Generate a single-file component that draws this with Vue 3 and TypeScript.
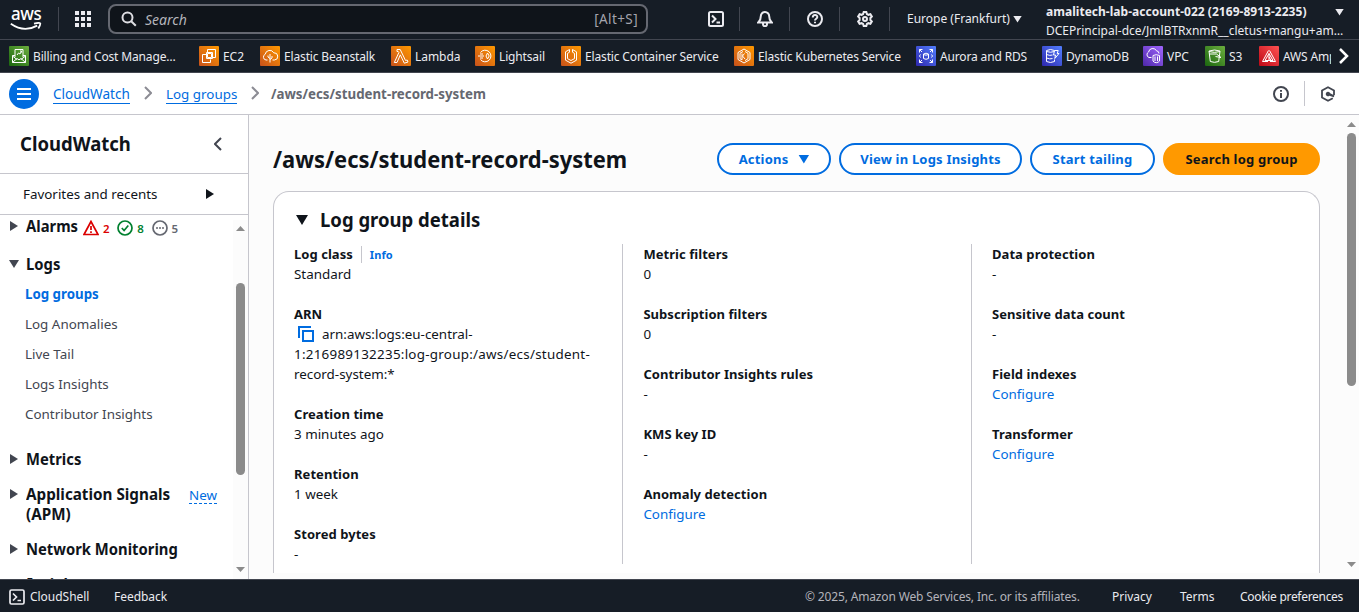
<script setup lang="ts">
interface Service { name: string; icon: string; tone: string }
interface Detail { label: string; value: string; link?: boolean; info?: boolean; copy?: boolean }

const services: Service[] = [
  { name: 'Billing and Cost Manage…', icon: 'billing', tone: 'green' },
  { name: 'EC2', icon: 'ec2', tone: 'orange' },
  { name: 'Elastic Beanstalk', icon: 'beanstalk', tone: 'orange' },
  { name: 'Lambda', icon: 'lambda', tone: 'orange' },
  { name: 'Lightsail', icon: 'lightsail', tone: 'orange' },
  { name: 'Elastic Container Service', icon: 'ecs', tone: 'orange' },
  { name: 'Elastic Kubernetes Service', icon: 'eks', tone: 'orange' },
  { name: 'Aurora and RDS', icon: 'rds', tone: 'blue' },
  { name: 'DynamoDB', icon: 'dynamo', tone: 'blue' },
  { name: 'VPC', icon: 'vpc', tone: 'purple' },
  { name: 'S3', icon: 's3', tone: 'green' },
  { name: 'AWS Amplify', icon: 'amplify', tone: 'red' },
]

const glyphs: Record<string, string> = {
  billing: 'M6 9.500H3.500v7h13v-7H14M3.500 10l4.500 3.500M16.500 10l-4.500 3.500M3.500 16.500l4.500-4 2 1.300 2-1.300 4.500 4M6 11V3.500h8V11M8 9l1.500-2 1.500 1 1.500-3M11 5h1.500v1.500',
  ec2: 'M8.500 7.500h4v4h-4zM7.500 12.500h6v-6h-6zM7 8.500H3.500v8h8V13.500M8.500 6V3.500h8v8H14',
  beanstalk: 'M7.500 14H6a3 3 0 0 1-.800-5.700A4.600 4.600 0 0 1 13.800 6.800 3.400 3.400 0 0 1 14.500 14h-2M10 16.500V8M10 12.500 8 11V9.500M10 13.500l2-1.500v-2',
  lambda: 'M6 3.500h3.200L14.500 14.500l1.700-.5.8 2-3.700 1.200L9.300 8.800 6 16.500H3.300L7.900 6.500 7.200 5.500H6z',
  lightsail: 'M5.500 6.500a5.800 5.800 0 1 1 0 7M3 10h6M5 8h3M5 12h3M12.500 7l1.700 3-1.700 3L11 10z',
  ecs: 'M8.500 3.500 4.500 5.800v8.400l5.500 3 5.500-3V5.800l-4-2.300v2.700l2 1.200v5.200L10 14.500l-3.500-1.900V7.400l2-1.200z',
  eks: 'M10 3 4 6.500v7l6 3.500 6-3.500v-7zM9 5.500l-3 1.800v5.400l2 1.200V7.500M11 5.500l3 1.800v5.400l-3 1.900M10.500 7.500 8.500 10l2.500 3',
  rds: 'M3.500 6.500v-3h3M13.500 3.500h3v3M16.500 13.500v3h-3M6.500 16.500h-3v-3M3.500 3.500l2.500 2.500M16.500 3.500 14 6M16.500 16.500 14 14M3.500 16.500 6 14M7.500 8q2.500-1.600 5 0v4.500q-2.500 1.600-5 0zM7.500 8.500q2.500 1.400 5 0M4.500 8.500l-1 1.500 1 1.500M15.500 8.500l1 1.500-1 1.500',
  dynamo: 'M4.500 4.500q4-2 8 0M4.500 4.500v11q4 2 8 0v-2M4.500 5.500q4 1.500 8 0M4.500 8.500q3.500 1.500 6 .5M4.500 12q3.500 1.500 6 .5M12.500 4.500h3.700l-1 3H17l-4.200 5 .7-3.500h-2z',
  vpc: 'M8.500 11.500H6a3 3 0 0 1-.4-5.500 4.200 4.200 0 0 1 7.900-1.200 2.800 2.800 0 0 1 2.500 2.700M10 9.500q3.200-1.600 6.500 0v5.500q-1 1.500-3.200 1.700-2.300-.2-3.300-1.700zM12 10.500v4.500M14.500 10.500v4.500',
  s3: 'M4 5q5.500-2 11 0l-1.300 10.500q-4.200 1.700-8.400 0zM4 5.500q5.500 1.800 11 0M4.500 8h7l4.500 3.500-5.500-1',
  amplify: 'M9.500 4.500 3.500 15.500h5.500M10.500 4.500l6 11h-5.500M10 7.500l-4 7h8zM10 7.500v7M10 11l2 3.500',
}

const subLinks = ['Log groups', 'Log Anomalies', 'Live Tail', 'Logs Insights', 'Contributor Insights']

const columns: Detail[][] = [
  [
    { label: 'Log class', value: 'Standard', info: true },
    { label: 'ARN', value: 'arn:aws:logs:eu-central-\n1:216989132235:log-group:/aws/ecs/student-\nrecord-system:*', copy: true },
    { label: 'Creation time', value: '3 minutes ago' },
    { label: 'Retention', value: '1 week' },
    { label: 'Stored bytes', value: '-' },
  ],
  [
    { label: 'Metric filters', value: '0' },
    { label: 'Subscription filters', value: '0' },
    { label: 'Contributor Insights rules', value: '-' },
    { label: 'KMS key ID', value: '-' },
    { label: 'Anomaly detection', value: 'Configure', link: true },
  ],
  [
    { label: 'Data protection', value: '-' },
    { label: 'Sensitive data count', value: '-' },
    { label: 'Field indexes', value: 'Configure', link: true },
    { label: 'Transformer', value: 'Configure', link: true },
  ],
]
</script>

<template>
  <div class="console">
    <header class="top">
      <div class="logo">
        <span class="logo-word">aws</span>
        <svg class="smile" viewBox="0 0 32 10"><path d="M.8 1.800Q14 11 27.200 3.600" /><path d="M24 1.600q5.600-1.400 6.200-.2.500 1.300-1.900 5" /></svg>
      </div>
      <i class="rule logo-rule"></i>
      <svg class="grid-icon" viewBox="0 0 16 16"><path d="M0 0h4v4H0zM6 0h4v4H6zM12 0h4v4h-4zM0 6h4v4H0zM6 6h4v4H6zM12 6h4v4h-4zM0 12h4v4H0zM6 12h4v4H6zM12 12h4v4h-4z" /></svg>
      <div class="search">
        <svg viewBox="0 0 16 16"><circle cx="6.500" cy="6.500" r="5" /><path d="m10.200 10.200 4.600 4.600" /></svg>
        <em>Search</em><span>[Alt+S]</span>
      </div>
      <nav class="tools">
        <a><svg viewBox="0 0 16 16"><rect x="1" y="1" width="14" height="14" rx="1.500" /><path d="m4 4.500 3.500 3.500L4 11.500M8.500 11.500H12" /></svg></a>
        <a><svg viewBox="0 0 16 16"><path d="M8 1a4.200 4.200 0 0 0-4.200 4.200c0 3.800-.8 4.300-2.600 6.300h13.600c-1.800-2-2.600-2.500-2.600-6.300A4.200 4.200 0 0 0 8 1zM6 12v1.200a2 2 0 0 0 4 0V12" /></svg></a>
        <a><svg viewBox="0 0 16 16"><circle cx="8" cy="8" r="7" /><path d="M5.800 6.400c0-3.100 4.500-3 4.500-.4C10.300 7.700 8 7.700 8 9.500M8 10.700v1.600" /></svg></a>
        <a><svg viewBox="0 0 16 16"><path d="m6.700 1h2.600l.6 2 1.500.8 2-.6 1.400 2.300L13.400 7v2l1.400 1.500-1.400 2.300-2-.6-1.500.8-.6 2H6.700l-.6-2-1.500-.8-2 .6-1.400-2.300L2.600 9V7L1.200 5.500l1.400-2.300 2 .6L6.100 3z" /><circle cx="8" cy="8" r="2" /></svg></a>
      </nav>
      <span class="region">Europe (Frankfurt)</span><i class="caret-down"></i>
      <div class="account"><b>amalitech-lab-account-022 (2169-8913-2235)</b><span>DCEPrincipal-dce/JmlBTRxnmR__cletus+mangu+am…</span></div>
      <i class="caret-down account-caret"></i>
    </header>

    <nav class="services">
      <a v-for="s in services" :key="s.name" class="service">
        <svg :class="['tile', s.tone]" viewBox="0 0 20 20"><path :d="glyphs[s.icon]" /></svg>
        <span>{{ s.name }}</span>
      </a>
      <svg class="next" viewBox="0 0 10 16"><path d="m1 1 7 7-7 7" /></svg>
    </nav>

    <div class="crumbs">
      <button class="menu"><svg viewBox="0 0 14 14"><path d="M0 2h14M0 7h14M0 12h14" /></svg></button>
      <a class="crumb first">CloudWatch</a>
      <svg class="sep" viewBox="0 0 8 14"><path d="m1 1 6 6-6 6" /></svg>
      <a class="crumb second">Log groups</a>
      <svg class="sep" viewBox="0 0 8 14"><path d="m1 1 6 6-6 6" /></svg>
      <b class="here">/aws/ecs/student-record-system</b>
      <svg class="round" viewBox="0 0 16 16"><circle cx="8" cy="8" r="7" /><path d="M8 7v5M8 4v1.700" /></svg>
      <i class="crumb-rule"></i>
      <svg class="round hex" viewBox="0 0 16 16"><path d="M14 9V4.500L8 1.200 2 4.500v7l6 3.300 4.800-2.600" /><path class="solid" d="M5.700 7.900a2.300 2.300 0 0 1 4.500-.6l4.300 2.300-.8 1.600-4.300-1.500A2.300 2.300 0 0 1 5.700 7.900z" /></svg>
    </div>

    <div class="body">
      <aside class="side">
        <div class="side-title"><h2>CloudWatch</h2><svg viewBox="0 0 8 14"><path d="M7 1 1 7l6 6" /></svg></div>
        <div class="favorites"><span>Favorites and recents</span><i class="caret-right"></i></div>
        <div class="side-scroll">
          <div class="tree">
            <div class="node alarms">
              <i class="caret-right"></i><b>Alarms</b>
              <span class="stat red-stat"><svg viewBox="0 0 16 16"><path d="M8 1.500 1 14.500h14zM8 6v4M8 11.300v1.700" /></svg><em>2</em></span>
              <span class="stat green-stat"><svg viewBox="0 0 16 16"><circle cx="8" cy="8" r="7" /><path d="m4.800 8 2.300 2.500L11.300 5.500" /></svg><em>8</em></span>
              <span class="stat grey-stat"><svg viewBox="0 0 16 16"><circle cx="8" cy="8" r="7" /><path d="M4 8h2M7 8h2M10 8h2" /></svg><em>5</em></span>
            </div>
            <div class="node logs"><i class="caret-down"></i><b>Logs</b></div>
            <a v-for="(l, i) in subLinks" :key="l" :class="['sub', { active: i === 0 }]">{{ l }}</a>
            <div class="node metrics"><i class="caret-right"></i><b>Metrics</b></div>
            <div class="node apm"><i class="caret-right"></i><b>Application Signals<br />(APM)</b><a>New</a></div>
            <div class="node network"><i class="caret-right"></i><b>Network Monitoring</b></div>
            <div class="node insights"><b>Insights</b></div>
          </div>
          <div class="side-bar"><i class="arrow up"></i><i class="thumb"></i><i class="arrow down"></i></div>
        </div>
      </aside>

      <main class="main">
        <div class="content">
          <div class="heading">
            <h1>/aws/ecs/student-record-system</h1>
            <button class="btn actions">Actions<i></i></button>
            <button class="btn view">View in Logs Insights</button>
            <button class="btn tail">Start tailing</button>
            <button class="btn primary">Search log group</button>
          </div>
          <section class="panel">
            <div class="panel-title"><i></i><h2>Log group details</h2></div>
            <div class="columns">
              <div v-for="(col, c) in columns" :key="c" class="column">
                <div v-for="d in col" :key="d.label" class="detail">
                  <div class="label">{{ d.label }}<span v-if="d.info" class="info">Info</span></div>
                  <div :class="['value', { link: d.link, arn: d.copy }]"><svg v-if="d.copy" viewBox="0 0 16 16"><path d="M5 5h10v10H5zM1 12V1h12" /></svg><span v-for="(line, n) in d.value.split('\n')" :key="n" :class="'line-' + n">{{ line }}</span></div>
                </div>
              </div>
            </div>
          </section>
        </div>
        <div class="main-bar"><i class="arrow up"></i><i class="thumb"></i><i class="arrow down"></i></div>
      </main>
    </div>

    <footer class="footer">
      <svg viewBox="0 0 16 16"><rect x="1" y="1" width="14" height="14" rx="1.500" /><path d="m4 4.500 3.500 3.500L4 11.500M8.500 11.500H12" /></svg>
      <a class="shell">CloudShell</a><a class="feedback">Feedback</a>
      <span class="copyright">© 2025, Amazon Web Services, Inc. or its affiliates.</span>
      <a class="privacy">Privacy</a><a class="terms">Terms</a><a class="cookies">Cookie preferences</a>
    </footer>
  </div>
</template>

<style>
body { margin: 0; overflow: hidden; }
</style>

<style scoped>
* { box-sizing: border-box; }
.console { width: 1359px; height: 612px; display: flex; flex-direction: column; overflow: hidden; background: #fff; color: #0f141a; font: 13.4px/20px "Noto Sans", "Open Sans", sans-serif; }
svg { display: block; flex: none; fill: none; stroke: currentColor; stroke-width: 2; }
i { flex: none; display: block; }
h1, h2 { margin: 0; white-space: nowrap; }
button { font: inherit; margin: 0; padding: 0; }
a, span, b { white-space: nowrap; }

.top { height: 40px; flex: none; display: flex; align-items: center; padding-bottom: 1px; background: #161d26; border-bottom: 1px solid #424650; color: #ebebf0; }
.logo { width: 32px; height: 28px; margin: 4px 0 0 10px; flex: none; color: #fff; }
.logo-word { display: block; height: 15px; font-size: 18px; line-height: 13px; font-weight: 500; letter-spacing: -.4px; padding-left: 1px; transform: scaleX(.94); transform-origin: 0 0; }
.smile { width: 32px; height: 10px; stroke-width: 1.800; }
.rule { width: 1px; height: 24px; background: #424650; margin-left: 16px; }
.grid-icon { width: 16px; height: 16px; margin-left: 16px; fill: #ebebf0; stroke: none; }
.search { width: 540px; height: 30px; margin-left: 17px; padding: 0 8px 0 11px; flex: none; display: flex; align-items: center; border: 2px solid #656871; border-radius: 8px; background: #0f141a; color: #b4b4bb; }
.search svg { width: 16px; height: 16px; color: #dedee3; }
.search em { margin: 1px 0 0 8px; flex: 1; font-size: 14px; }
.search span { color: #a4a4ad; font-size: 13.5px; letter-spacing: .4px; }
.tools { display: flex; margin-left: 42px; }
.tools a { width: 50px; height: 24px; padding: 4px 0 0 17px; border-right: 1px solid #424650; }
.tools a:first-child svg { margin-left: 1px; }
.tools svg { width: 16px; height: 16px; }
.region { margin-left: 17px; width: 102px; font-size: 12px; }
.caret-down { width: 9px; height: 7px; background: currentColor; clip-path: polygon(0 0, 100% 0, 50% 100%); }
.region + .caret-down { margin-left: 4px; }
.account { width: 300px; height: 38px; margin-left: 24px; font-size: 12px; line-height: 18px; padding-top: 3px; }
.account b, .account span { display: block; height: 19px; }
.account b { letter-spacing: .03px; }
.account-caret { margin: -14px 0 0 -11px; }

.services { height: 33px; flex: none; position: relative; display: grid; grid-template-columns: 190px 61px 131px 84px 86px 173px 182px 126px 101px 62px 54px 72px; align-items: center; padding-left: 9px; background: #161d26; border-bottom: 1px solid #424650; color: #ebebf0; font-size: 12px; letter-spacing: -.15px; }
.service { display: flex; align-items: center; gap: 4px; min-width: 0; overflow: hidden; }
.service span { padding-top: 1px; }
.service:nth-child(4) span, .service:nth-child(2) span, .service:nth-child(10) span { letter-spacing: -.05px; }
.tile { width: 20px; height: 20px; border-radius: 1px; stroke-width: 1; color: #fff; }
.green { background: linear-gradient(45deg, #1b660f, #6cae3e); }
.orange { background: linear-gradient(45deg, #c8511b, #f90); }
.blue { background: linear-gradient(45deg, #2e27ad, #527fff); }
.purple { background: linear-gradient(45deg, #4d27a8, #a166ff); }
.red { background: linear-gradient(45deg, #bd0816, #ff5252); }
.next { position: absolute; left: 1339px; top: 8px; width: 10px; height: 16px; color: #fff; stroke-width: 2.500; }

.crumbs { height: 42px; flex: none; display: flex; align-items: center; border-bottom: 1px solid #c6c6cd; }
.menu { width: 30px; height: 30px; margin-left: 9px; display: grid; place-items: center; border: 0; border-radius: 50%; background: #006ce0; color: #fff; }
.menu svg { width: 14px; height: 14px; }
.crumb { height: 20px; margin-top: 1px; line-height: 20px; border-bottom: 1px solid #006ce0; color: #006ce0; }
.first { width: 77px; margin-left: 14px; font-size: 13.6px; }
.second { width: 71px; }
.sep { width: 8px; height: 14px; margin: -2px 14px 0; color: #8c8c94; }
.here { flex: 1; color: #656871; margin: 1px 0 0 -2px; font-size: 13.300px; }
.round { width: 16px; height: 16px; color: #424650; }
.hex { stroke-width: 1.800; }
.solid { fill: currentColor; stroke: none; }
.crumb-rule { width: 1px; height: 25px; margin: 0 15px; background: #c6c6cd; }
.crumbs > .round:last-child { margin-right: 23px; }

.body { flex: 1; min-height: 0; display: flex; }
.side { width: 249px; flex: none; display: flex; flex-direction: column; border-right: 1px solid #c6c6cd; }
.side-title { height: 59px; flex: none; display: flex; align-items: center; justify-content: space-between; padding: 0 26px 0 20px; border-bottom: 1px solid #c6c6cd; }
.side-title h2, .heading h1, .panel-title h2, .node b { transform: scaleX(.925); transform-origin: 0 50%; }
.side-title h2 { font-size: 20px; }
.side-title svg { width: 8px; height: 14px; color: #424650; }
.favorites { height: 41px; flex: none; display: flex; align-items: center; justify-content: space-between; padding: 0 34px 0 23px; border-bottom: 1px solid #c6c6cd; }
.caret-right { width: 8px; height: 10px; background: currentColor; clip-path: polygon(0 0, 100% 50%, 0 100%); }
.side-scroll { flex: 1; min-height: 0; display: flex; }
.tree { flex: 1; overflow: hidden; }
.node { display: flex; padding-left: 10px; font-size: 16px; }
.node .caret-right { margin: 5px 8.300px 0 0; color: #424650; }
.node .caret-down { width: 10px; height: 8px; margin: 6px 7.300px 0 -1px; color: #424650; }
.alarms { height: 20px; margin-top: 1px; }
.alarms b { width: 52.700px; }
.stat { display: flex; height: 16px; margin: 4px 0 0 4px; }
.stat svg { width: 16px; height: 16px; stroke-width: 1.700; }
.stat em { width: 6px; margin-left: 4px; font: 600 11.500px/18px "Noto Sans", sans-serif; }
.stat + .stat { margin-left: 8.300px; }
.red-stat { color: #db0000; } .green-stat { color: #00802f; } .grey-stat { color: #656871; }
.logs { margin-top: 18px; height: 25px; }
.sub { display: block; height: 30px; line-height: 20px; padding: 5px 0 0 25px; color: #424650; }
.active { color: #006ce0; font-weight: 700; font-size: 13.300px; }
.metrics { margin-top: 20px; }
.apm, .network { margin-top: 15px; }
.apm b { width: 144.700px; transform: scaleX(.952); }
.apm a { height: 19px; margin: 1px 0 0 18px; font-size: 13.4px; line-height: 20px; color: #006ce0; border-bottom: 1px dashed #006ce0; }
.insights { margin-top: 15px; padding-left: 26.500px; }
.side-bar { width: 15px; flex: none; position: relative; background: #fcfcfc; margin-top: 5px; }
.arrow { position: absolute; width: 9px; height: 5px; left: 3px; background: #8b8b8b; }
.up { top: 6px; clip-path: polygon(50% 0, 100% 100%, 0 100%); }
.down { bottom: 7px; clip-path: polygon(0 0, 100% 0, 50% 100%); }
.thumb { position: absolute; left: 3px; top: 63px; width: 9px; height: 192px; border-radius: 5px; background: #8b8b8b; }

.main { flex: 1; min-width: 0; display: flex; background: #fcfcfc; }
.content { flex: 1; padding: 28px 24px 0 24px; display: flex; flex-direction: column; }
.heading { height: 32px; flex: none; display: flex; align-items: center; gap: 8px; }
.heading h1 { flex: 1; min-width: 0; font-size: 24px; line-height: 32px; transform: scaleX(.913); }
.btn { height: 32px; border: 2px solid #006ce0; border-radius: 16px; background: #fff; color: #006ce0; font-size: 13px; letter-spacing: .2px; font-weight: 700; display: flex; align-items: center; justify-content: center; flex: none; white-space: nowrap; }
.actions { width: 114px; } .view { width: 183px; } .tail { width: 125px; }
.btn i { width: 11px; height: 9px; margin-left: 10px; background: currentColor; clip-path: polygon(0 0, 100% 0, 50% 100%); }
.primary { width: 157px; background: #f90; border-color: #f90; color: #0f141a; }
.panel { height: 382px; flex: none; margin-top: 16px; border: 1px solid #c6c6cd; border-bottom: 0; border-radius: 16px 16px 0 0; background: #fff; }
.panel-title { height: 32px; display: flex; align-items: center; padding-left: 22px; margin-top: 12px; }
.panel-title i { width: 12px; height: 10px; background: #0f141a; clip-path: polygon(0 0, 100% 0, 50% 100%); }
.panel-title h2 { margin-left: 12px; font-size: 20px; }
.columns { height: 320px; margin-top: 8px; display: grid; grid-template-columns: 349px 349px 1fr; }
.column { padding-left: 20px; border-right: 1px solid #c6c6cd; }
.column:nth-child(2) { padding-left: 20.400px; }
.column:last-child { border: 0; }
.detail + .detail { margin-top: 20px; }
.label { font-size: 13px; letter-spacing: .05px; font-weight: 700; height: 20px; display: flex; }
.value { width: 308px; min-height: 20px; }
.link { color: #006ce0; }
.info { height: 17px; line-height: 18px; margin: 2px 0 0 8px; padding-left: 8px; border-left: 1px solid #c6c6cd; color: #006ce0; font-size: 11px; }
.arn { line-height: 20px; height: 60px; }
.arn svg { display: inline-block; width: 16px; height: 16px; margin: 0 8px 0 4px; vertical-align: -3px; color: #006ce0; }
.line-1, .line-2 { display: block; }
.line-1 { letter-spacing: .26px; }
.main-bar { width: 15px; position: relative; flex: none; }
.main-bar .up { top: 7px; }
.main-bar .down { bottom: 12px; }
.main-bar .thumb { top: 18px; height: 253px; }

.footer { height: 33px; flex: none; display: flex; align-items: center; padding-top: 2px; background: #161d26; border-top: 1px solid #424650; color: #ebebf0; font-size: 12px; letter-spacing: -.03px; }
.footer svg { width: 16px; height: 16px; margin-left: 9px; stroke-width: 1.700; }
.shell { width: 84px; margin-left: 5px; }
.copyright { margin-left: auto; width: 307px; color: #b4b4bb; letter-spacing: -.15px; }
.privacy { width: 68px; } .terms { width: 60px; } .cookies { width: 119px; letter-spacing: -.3px; }
</style>
